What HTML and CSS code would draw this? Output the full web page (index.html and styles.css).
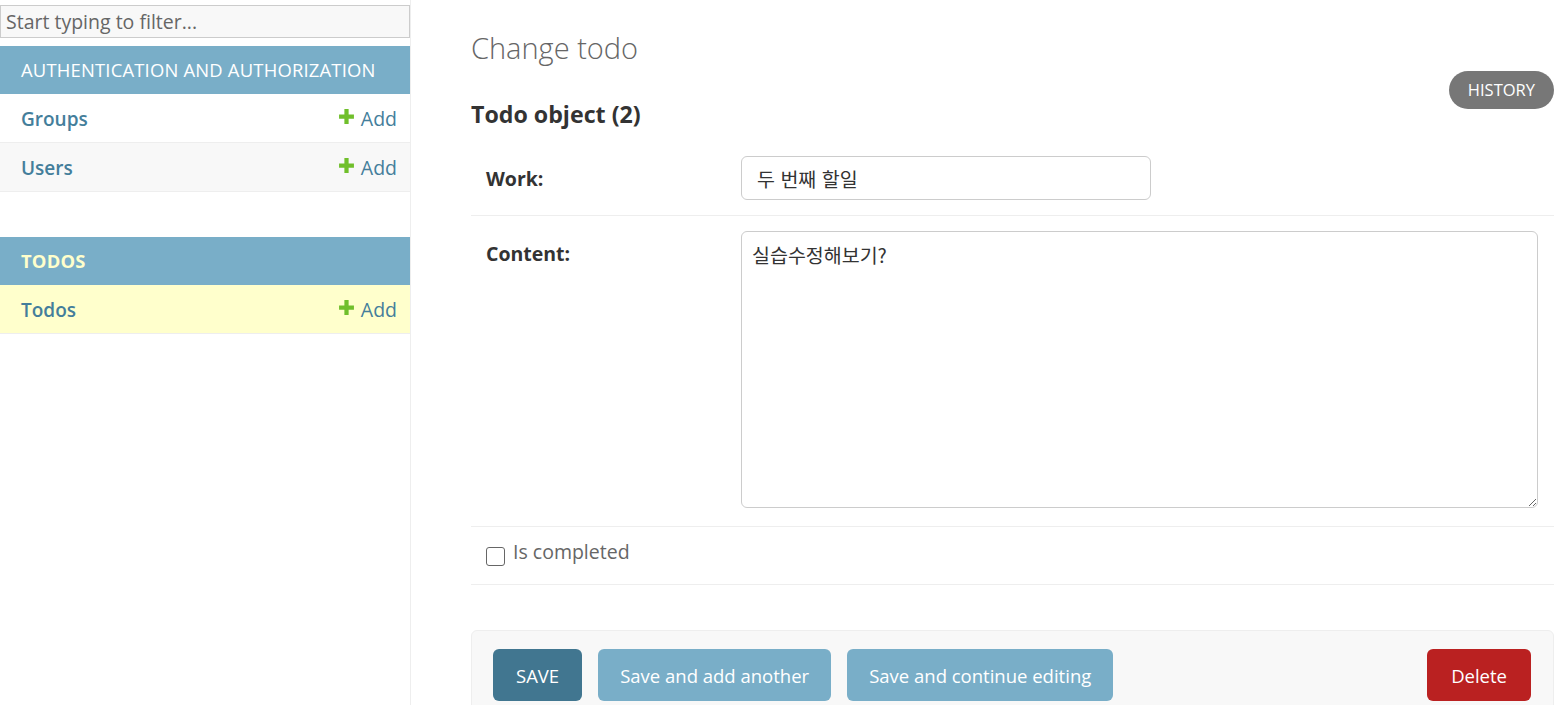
FILE: index.html
```html
<!DOCTYPE html>
<html lang="ko">
<head>
<meta charset="utf-8">
<title>Change todo</title>
<link rel="stylesheet" href="styles.css">
</head>
<body>
<div class="layout">
  <nav class="sidebar">
    <input class="nav-filter" type="search" placeholder="Start typing to filter...">
    <div class="module">
      <div class="caption">Authentication and Authorization</div>
      <div class="mrow">
        <a class="mlink">Groups</a>
        <a class="addlink"><svg class="plus" viewBox="0 0 16 16"><path d="M6 1h4v5h5v4h-5v5H6v-5H1V6h5z" fill="#70bf2b"/></svg>Add</a>
      </div>
      <div class="mrow alt">
        <a class="mlink">Users</a>
        <a class="addlink"><svg class="plus" viewBox="0 0 16 16"><path d="M6 1h4v5h5v4h-5v5H6v-5H1V6h5z" fill="#70bf2b"/></svg>Add</a>
      </div>
    </div>
    <div class="module current">
      <div class="caption">Todos</div>
      <div class="mrow selected">
        <a class="mlink">Todos</a>
        <a class="addlink"><svg class="plus" viewBox="0 0 16 16"><path d="M6 1h4v5h5v4h-5v5H6v-5H1V6h5z" fill="#70bf2b"/></svg>Add</a>
      </div>
    </div>
  </nav>
  <main class="content">
    <h1 class="title">Change todo</h1>
    <div class="subhead">
      <h2 class="subtitle">Todo object (2)</h2>
      <a class="history">HISTORY</a>
    </div>
    <div class="fieldset">
      <div class="frow">
        <label class="flabel">Work:</label>
        <input class="vtext" type="text" value="두 번째 할일">
      </div>
      <div class="frow">
        <label class="flabel">Content:</label>
        <textarea class="vlarge">실습수정해보기?</textarea>
      </div>
      <div class="frow check">
        <span class="box"></span>
        <label class="clabel">Is completed</label>
      </div>
    </div>
    <div class="submit-row">
      <button class="btn save">SAVE</button>
      <button class="btn light">Save and add another</button>
      <button class="btn light">Save and continue editing</button>
      <span class="spacer"></span>
      <button class="btn delete">Delete</button>
    </div>
  </main>
</div>
</body>
</html>
```
FILE: styles.css
```css
* { box-sizing: border-box; }
html, body { margin: 0; padding: 0; background: #fff; }
body {
  font-family: "Segoe UI", "Open Sans", "Noto Sans", "Noto Sans CJK KR", sans-serif;
  color: #333;
  font-size: 19.5px;
  overflow: hidden;
}
.layout { display: flex; min-height: 705px; }
.sidebar {
  width: 411px;
  flex: none;
  border-right: 1px solid #eee;
  padding-top: 5px;
}
.nav-filter {
  display: block;
  width: 410px;
  height: 33px;
  margin: 0 0 8px 0;
  padding: 0 5px;
  border: 1px solid #ccc;
  background: #f8f8f8;
  font-family: inherit;
  font-size: 19.5px;
  color: #333;
  outline: none;
}
.nav-filter::placeholder { color: #666; }
.module { margin-bottom: 45px; }
.caption {
  background: #79aec8;
  color: #fff;
  text-transform: uppercase;
  font-size: 18.4px;
  letter-spacing: 0.2px;
  height: 48px;
  line-height: 48px;
  padding: 0 21px;
}
.current .caption { color: #ffc; font-weight: 700; }
.mrow {
  display: flex;
  justify-content: space-between;
  align-items: center;
  height: 49px;
  padding: 1px 13px 0 21px;
  border-bottom: 1px solid #eee;
  background: #fff;
}
.mrow.alt { background: #f8f8f8; }
.mrow.selected { background: #ffc; }
.mlink { color: #447e9b; font-weight: 600; font-size: 19px; }
.addlink { color: #447e9b; display: flex; align-items: center; }
.plus { width: 17px; height: 17px; margin-right: 6px; position: relative; top: -2px; }

.content { flex: 1; padding: 0 11px 0 60px; }
.title {
  margin: 30px 0 5px 0;
  font-size: 29px;
  line-height: 36px;
  font-weight: 300;
  color: #666;
}
.subhead { display: flex; justify-content: space-between; align-items: flex-start; }
.subtitle {
  margin: 28px 0 0 0;
  font-size: 23.2px;
  line-height: 30px;
  font-weight: 700;
  color: #333;
}
.history {
  background: #777;
  color: #fff;
  font-size: 16.5px;
  height: 38px;
  line-height: 38px;
  padding: 0 19px;
  border-radius: 19px;
}
.fieldset { margin-top: 12px; }
.frow {
  display: flex;
  align-items: flex-start;
  padding: 15px 15px 15px 15px;
  border-bottom: 1px solid #eee;
}
.flabel {
  width: 255px;
  flex: none;
  font-weight: 700;
  padding-top: 6px;
  line-height: 33px;
  color: #333;
}
.vtext {
  width: 410px;
  height: 44px;
  border: 1px solid #ccc;
  border-radius: 6px;
  padding: 0 15px;
  font-family: "Noto Sans CJK KR", sans-serif;
  font-size: 19.5px;
  color: #333;
}
.vlarge {
  display: block;
  width: 797px;
  height: 277px;
  border: 1px solid #ccc;
  border-radius: 6px;
  padding: 8px 10px;
  font-family: "Noto Sans CJK KR", sans-serif;
  font-size: 19.5px;
  color: #333;
  resize: vertical;
  margin-bottom: 3px;
}
.frow.check { padding: 14px 15px 15px 15px; height: 58px; align-items: flex-start; }
.box {
  width: 19px;
  height: 19px;
  border: 1.5px solid #666;
  border-radius: 3px;
  margin-top: 6px;
  flex: none;
}
.clabel { margin-left: 8px; color: #666; line-height: 22px; }
.submit-row {
  display: flex;
  align-items: center;
  gap: 16px;
  margin-top: 45px;
  padding: 18px 22px 18px 21px;
  background: #f8f8f8;
  border: 1px solid #eee;
  border-radius: 6px;
}
.btn {
  height: 52px;
  border: none;
  border-radius: 6px;
  color: #fff;
  font-family: inherit;
  font-size: 18.5px;
  padding: 0 22px;
}
.save { background: #417690; padding: 0 23px; }
.light { background: #79aec8; }
.delete { background: #ba2121; padding: 0 24px; }
.spacer { flex: 1; }
```
